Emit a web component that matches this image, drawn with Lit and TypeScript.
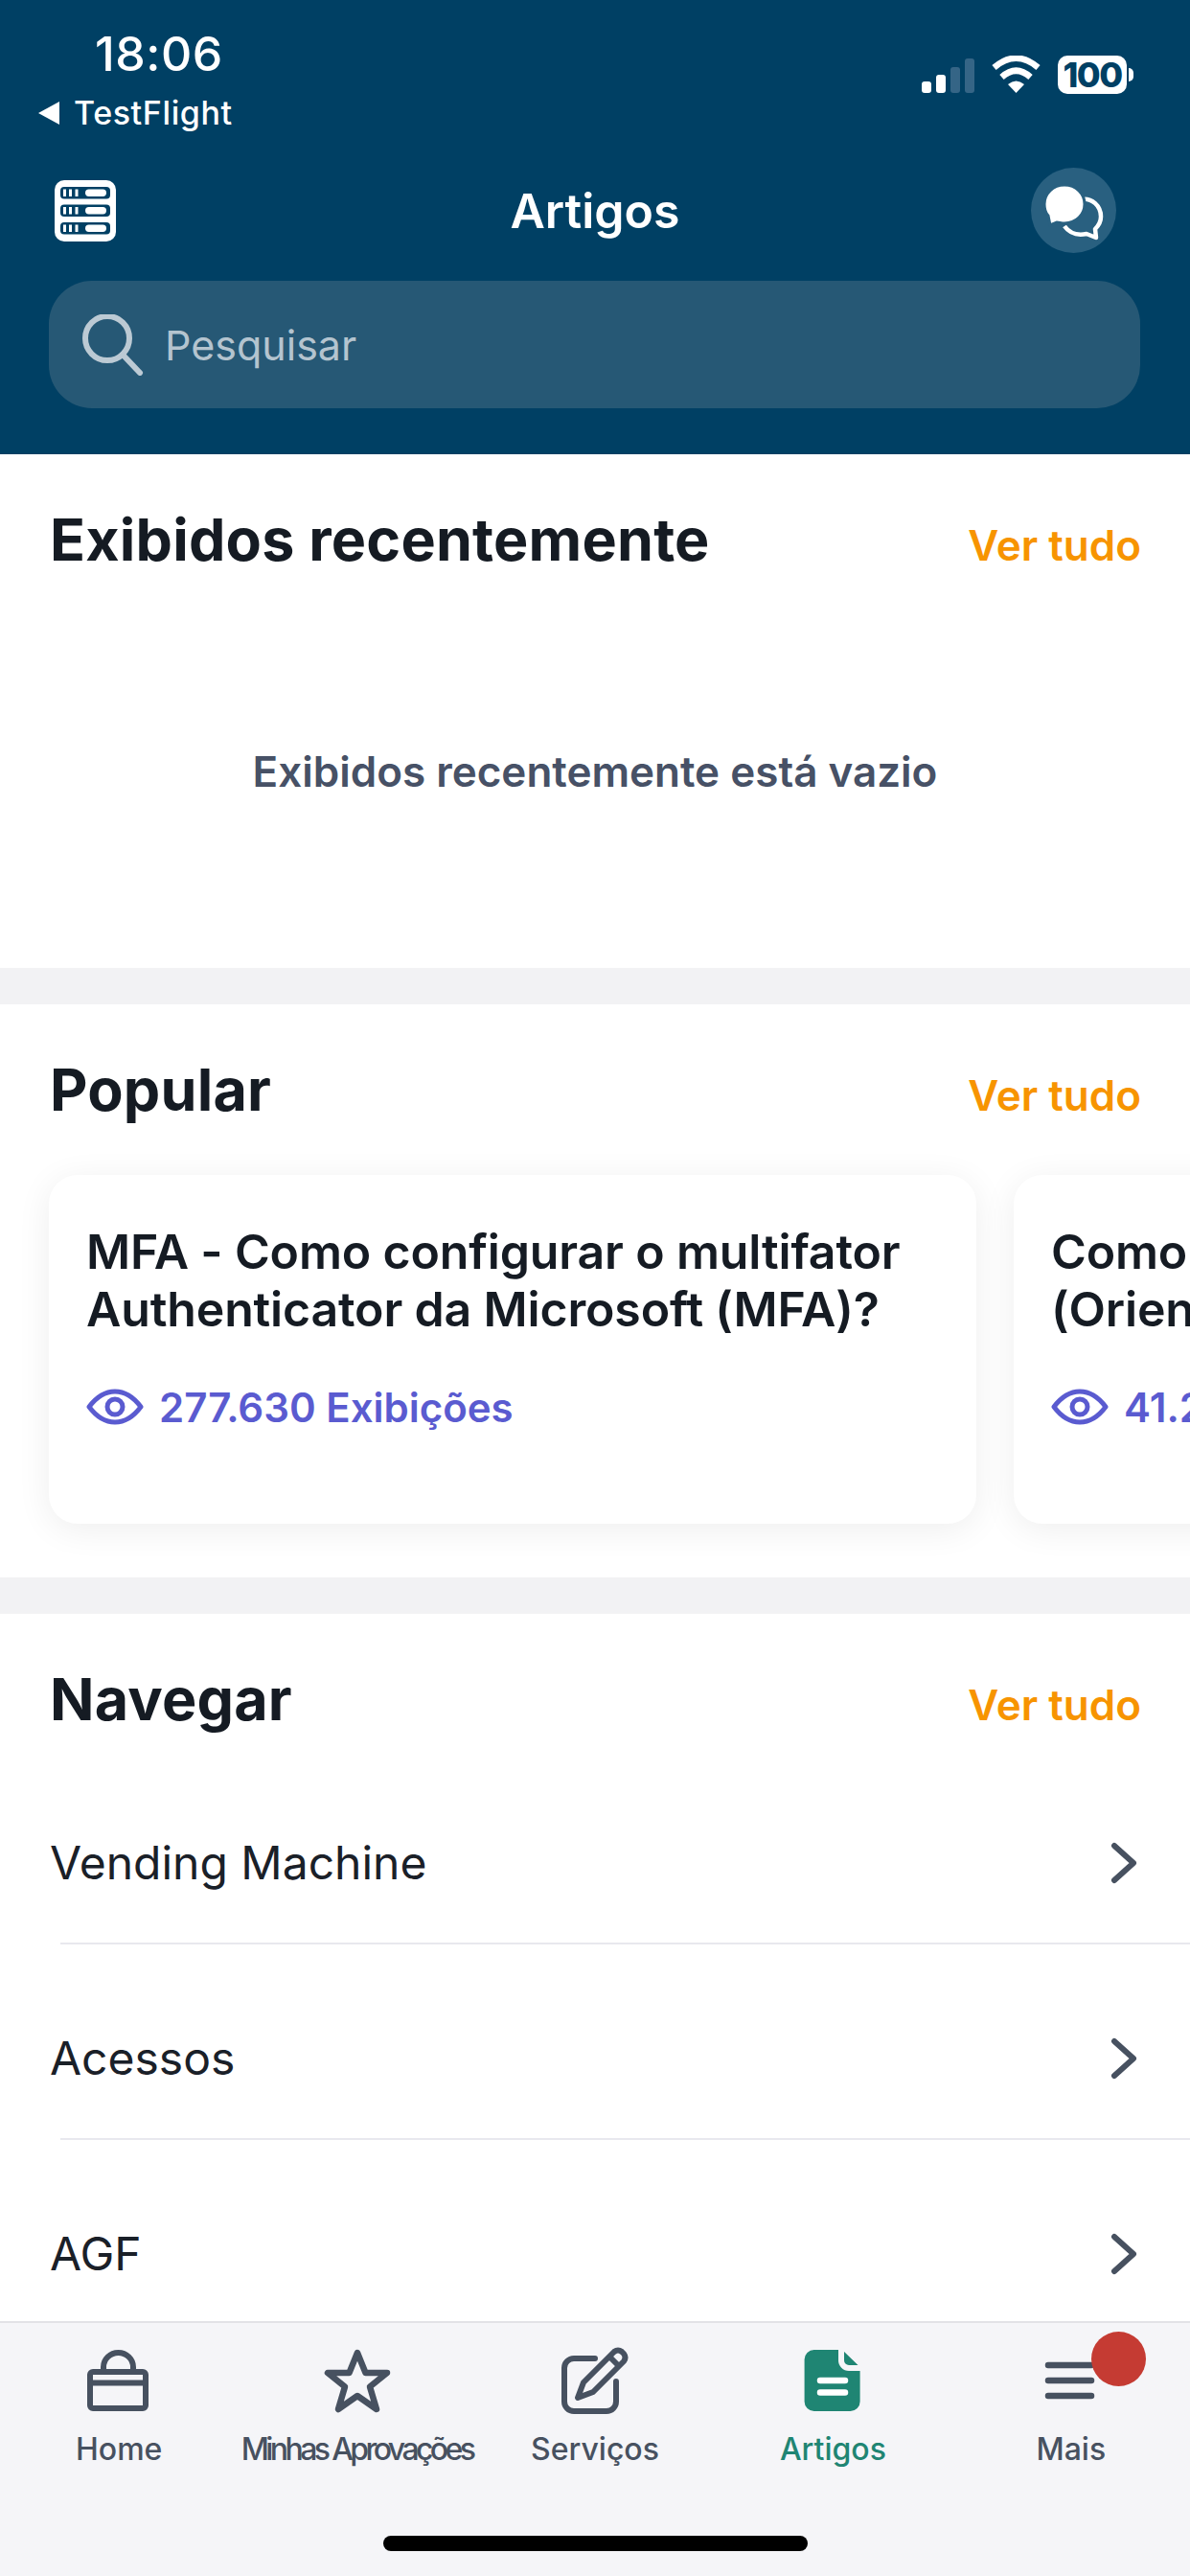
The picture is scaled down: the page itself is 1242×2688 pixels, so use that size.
import { LitElement, html, css, svg } from 'lit';
import { customElement } from 'lit/decorators.js';
import { classMap } from 'lit/directives/class-map.js';

const tabIcons = {
  home: svg`<g fill="none" stroke="#475160" stroke-width="6" stroke-linejoin="round">
    <rect x="6" y="27" width="58" height="38" rx="3"/>
    <path d="M6 38.5H64"/>
    <path d="M20 27V22a15.5 15 0 0 1 31 0V27"/></g>`,
  star: svg`<path fill="none" stroke="#475160" stroke-width="6.5" stroke-linejoin="round"
    d="M36 7L44.5 28H67L49 42.5L56 66L36 52L16 66L23 42.5L5 28H27.5Z"/>`,
  edit: svg`<g fill="none" stroke="#475160" stroke-width="6" stroke-linecap="round" stroke-linejoin="round">
    <path d="M36 13H14a10 10 0 0 0-10 10V58a10 10 0 0 0 10 10H48a10 10 0 0 0 10-10V37"/>
    <path d="M18 54L24 38L56 6Q60 3 64 6L66 8Q69 12 66 16L34 48Z"/>
    <path d="M52 12L60 20"/></g>`,
  doc: svg`<path fill="#1f8573" d="M16.6 4H46L64.6 22V58a10 10 0 0 1-10 10H16.6a10 10 0 0 1-10-10V14a10 10 0 0 1 10-10Z"/>
    <path fill="none" stroke="#f5f5f8" stroke-width="6" d="M45 1V15a8 8 0 0 0 8 8H67"/>
    <path fill="none" stroke="#fff" stroke-width="6.5" stroke-linecap="round" d="M23 36H49M23 48.5H49"/>`,
  menu: svg`<path fill="none" stroke="#475160" stroke-width="6.5" stroke-linecap="round" d="M12 20H57M12 36H57M12 52H57"/>`,
};

const tabs = [
  { label: 'Home', icon: tabIcons.home },
  { label: 'Minhas Aprovações', icon: tabIcons.star, tight: true },
  { label: 'Serviços', icon: tabIcons.edit },
  { label: 'Artigos', icon: tabIcons.doc, active: true },
  { label: 'Mais', icon: tabIcons.menu, badge: true },
];

const categories = ['Vending Machine', 'Acessos', 'AGF'];

// the second card runs off the screen, only its visible start is known
const articles = [
  { lines: ['MFA - Como configurar o multifator', 'Authenticator da Microsoft (MFA)?'], views: '277.630 Exibições' },
  { lines: ['Como', '(Orien'], views: '41.2' },
];

@customElement('app-root')
export class AppRoot extends LitElement {
  static styles = css`
    :host {
      display: block;
      font-family: Inter, "Noto Sans", sans-serif;
    }
    .page {
      height: 2688px;
      display: flex;
      flex-direction: column;
      overflow: hidden;
      background: #f2f2f4;
    }

    /* header */
    .top {
      background: #004064;
      height: 474px;
      flex: none;
      padding-top: 28px;
      box-sizing: border-box;
      color: #fff;
    }
    .status {
      display: flex;
      justify-content: space-between;
      padding: 0 66px 0 40px;
    }
    .time {
      font-size: 50px;
      line-height: 56px;
      font-weight: 500;
      margin-left: 59px;
      letter-spacing: 0.5px;
    }
    .back {
      display: flex;
      align-items: center;
      gap: 15px;
      margin-top: 14px;
      font-size: 34px;
      line-height: 40px;
      font-weight: 500;
      letter-spacing: 0.6px;
    }
    .sys {
      display: flex;
      align-items: flex-start;
      margin-top: 30px;
    }
    .signal {
      display: flex;
      align-items: flex-end;
      gap: 5px;
      height: 39px;
      margin-right: 18px;
    }
    .signal i {
      width: 10px;
      border-radius: 3px;
      background: #fff;
    }
    .signal i.off {
      background: #356586;
    }
    .battery {
      margin-left: 18px;
      width: 72px;
      height: 40px;
      border-radius: 10px;
      background: #fff;
      color: #004064;
      font-size: 36px;
      font-weight: 800;
      line-height: 40px;
      text-align: center;
      letter-spacing: -1.5px;
      position: relative;
    }
    .battery::after {
      content: '';
      position: absolute;
      right: -7px;
      top: 13px;
      width: 5px;
      height: 14px;
      border-radius: 0 5px 5px 0;
      background: #fff;
    }
    .nav {
      display: grid;
      grid-template-columns: 1fr auto 1fr;
      align-items: center;
      height: 89px;
      margin-top: 37px;
      padding: 0 57px;
    }
    .nav h1 {
      margin: 0;
      font-size: 50px;
      line-height: 60px;
      font-weight: 600;
    }
    .chat {
      justify-self: end;
      width: 89px;
      height: 89px;
      margin-right: 20px;
      border-radius: 50%;
      background: #296080;
      display: block;
    }
    .search {
      display: flex;
      align-items: center;
      gap: 22px;
      height: 133px;
      margin: 29px 52px 0 51px;
      padding-left: 35px;
      border-radius: 45px;
      background: #265875;
      color: #b4c4cf;
      font-size: 43px;
    }

    /* sections */
    .content {
      flex: 1;
      min-height: 0;
      overflow: hidden;
      display: flex;
      flex-direction: column;
      gap: 38px;
    }
    section {
      background: #fff;
      flex: none;
    }
    .head {
      display: flex;
      justify-content: space-between;
      align-items: baseline;
      padding: 53px 51px 0 52px;
    }
    .head h2 {
      margin: 0;
      font-size: 61px;
      line-height: 72px;
      font-weight: 700;
      color: #151b23;
      letter-spacing: 0.2px;
    }
    .head a {
      font-size: 44px;
      font-weight: 600;
      color: #f79400;
    }
    .empty {
      height: 411px;
      box-sizing: border-box;
      display: flex;
      align-items: center;
      justify-content: center;
      font-size: 44px;
      font-weight: 600;
      color: #475166;
    }

    /* cards */
    .cards {
      display: flex;
      gap: 39px;
      overflow: hidden;
      padding: 53px 0 56px 51px;
    }
    .card {
      flex: none;
      width: 968px;
      height: 364px;
      box-sizing: border-box;
      padding: 50px 39px 0;
      border-radius: 30px;
      background: #fff;
      box-shadow: 0 6px 36px rgba(0, 0, 0, 0.07);
    }
    .card h3 {
      margin: 0;
      font-size: 50px;
      line-height: 60px;
      font-weight: 600;
      letter-spacing: -0.15px;
      color: #151b23;
      white-space: nowrap;
    }
    .card h3 span {
      display: block;
    }
    .views {
      display: flex;
      align-items: center;
      gap: 16px;
      height: 48px;
      margin-top: 48px;
      font-size: 42px;
      font-weight: 600;
      color: #5a5bd0;
      white-space: nowrap;
    }

    /* list */
    .list {
      margin-top: 16px;
    }
    .row {
      display: flex;
      align-items: center;
      justify-content: space-between;
      margin-left: 63px;
      padding: 90px 55px 54px 0;
      border-bottom: 2px solid #e8e8ee;
      font-size: 48px;
      line-height: 58px;
      color: #1a2028;
    }
    .row span {
      margin-left: -11px;
    }

    /* tab bar */
    .bar {
      flex: none;
      height: 266px;
      box-sizing: border-box;
      border-top: 2px solid #e2e2e6;
      background: #f5f5f8;
      position: relative;
    }
    .tabs {
      display: grid;
      grid-template-columns: repeat(5, minmax(0, 1fr));
    }
    .tab {
      position: relative;
      display: flex;
      flex-direction: column;
      align-items: center;
      padding-top: 24px;
      font-size: 32px;
      line-height: 40px;
      font-weight: 500;
      color: #475160;
      white-space: nowrap;
    }
    .tab svg {
      display: block;
      margin-bottom: 16px;
    }
    .tab.active {
      color: #1f8573;
    }
    .tab.tight {
      letter-spacing: -3.6px;
    }
    .badge {
      position: absolute;
      left: 145px;
      top: 9px;
      width: 57px;
      height: 57px;
      border-radius: 50%;
      background: #c53b33;
    }
    .homebar {
      width: 443px;
      height: 16px;
      margin: 70px auto 0;
      border-radius: 8px;
      background: #000;
    }
  `;

  renderServerIcon() {
    const rows = [7, 25.5, 44];
    return html`<svg width="64" height="64" viewBox="0 0 64 64">
      <rect width="64" height="64" rx="10" fill="#fff"/>
      ${rows.map(y => svg`
        <rect x="6" y=${y} width="52" height="12.5" rx="4" fill="#004064"/>
        <path d="M10.5 ${y + 2.5}v7.5M16.5 ${y + 2.5}v7.5M23 ${y + 2.5}v7.5" stroke="#fff" stroke-width="3"/>
        <rect x="32" y=${y + 2.5} width="22" height="7.5" rx="3.7" fill="#fff"/>
      `)}
    </svg>`;
  }

  renderChatIcon() {
    return html`<svg class="chat" viewBox="0 0 89 89">
      <path fill="none" stroke="#fff" stroke-width="4.5" stroke-linejoin="round"
        d="M52 33C64 31 73 40 73 51C73 57 70 61 67 64L68 73L58 69C48 71 40 68 35 61"/>
      <path fill="#fff" stroke="#296080" stroke-width="3" d="M35 18C47 18 56 27 56 38C56 49 47 58 35 58C32 58 29 57 27 57L20 60L18 50C15 47 14 42 14 38C14 27 23 18 35 18Z"/>
    </svg>`;
  }

  renderHeader() {
    return html`<header class="top">
      <div class="status">
        <div>
          <div class="time">18:06</div>
          <div class="back">
            <svg width="22" height="24" viewBox="0 0 22 24"><path fill="#fff" d="M0 12L22 0V24Z"/></svg>
            TestFlight
          </div>
        </div>
        <div class="sys">
          <div class="signal">
            <i style="height:12px"></i><i style="height:19px"></i>
            <i class="off" style="height:27px"></i><i class="off" style="height:36px"></i>
          </div>
          <svg width="51" height="39" viewBox="0 0 51 39">
            <path fill="none" stroke="#fff" stroke-width="6.5" d="M2.5 12.5Q25.5 -7 48.5 12.5"/>
            <path fill="none" stroke="#fff" stroke-width="6.5" d="M10.5 22.5Q25.5 9 40.5 22.5"/>
            <path fill="#fff" d="M17 30Q25.5 23 34 30L25.5 39Z"/>
          </svg>
          <div class="battery">100</div>
        </div>
      </div>
      <div class="nav">
        ${this.renderServerIcon()}
        <h1>Artigos</h1>
        ${this.renderChatIcon()}
      </div>
      <div class="search">
        <svg width="64" height="64" viewBox="0 0 64 64" fill="none" stroke="#bccad4" stroke-width="6" stroke-linecap="round">
          <circle cx="26" cy="25" r="23"/><path d="M42 42L60 61"/>
        </svg>
        Pesquisar
      </div>
    </header>`;
  }

  renderHead(title: string) {
    return html`<div class="head"><h2>${title}</h2><a>Ver tudo</a></div>`;
  }

  renderCard(a: { lines: string[]; views: string }) {
    return html`<article class="card">
      <h3>${a.lines.map(l => html`<span>${l}</span>`)}</h3>
      <div class="views">
        <svg width="60" height="38" viewBox="0 0 60 38" fill="none" stroke="#5a5bd0" stroke-width="5">
          <path stroke-linejoin="round" d="M3 19Q15 3 30 3T57 19Q45 35 30 35T3 19Z"/>
          <circle cx="30" cy="19" r="8"/>
        </svg>
        ${a.views}
      </div>
    </article>`;
  }

  render() {
    return html`<div class="page">
      ${this.renderHeader()}
      <main class="content">
        <section>
          ${this.renderHead('Exibidos recentemente')}
          <div class="empty">Exibidos recentemente está vazio</div>
        </section>
        <section>
          ${this.renderHead('Popular')}
          <div class="cards">${articles.map(a => this.renderCard(a))}</div>
        </section>
        <section>
          ${this.renderHead('Navegar')}
          <div class="list">
            ${categories.map(c => html`<div class="row">
              <span>${c}</span>
              <svg width="28" height="44" viewBox="0 0 28 44" fill="none" stroke="#475160" stroke-width="6" stroke-linecap="round" stroke-linejoin="round">
                <path d="M4 4L24 22L4 40"/>
              </svg>
            </div>`)}
          </div>
        </section>
      </main>
      <nav class="bar">
        <div class="tabs">
          ${tabs.map(t => html`<div class=${classMap({ tab: true, active: !!t.active, tight: !!t.tight })}>
            <svg width="72" height="72" viewBox="0 0 72 72">${t.icon}</svg>
            ${t.label}
            ${t.badge ? html`<div class="badge"></div>` : ''}
          </div>`)}
        </div>
        <div class="homebar"></div>
      </nav>
    </div>`;
  }
}
